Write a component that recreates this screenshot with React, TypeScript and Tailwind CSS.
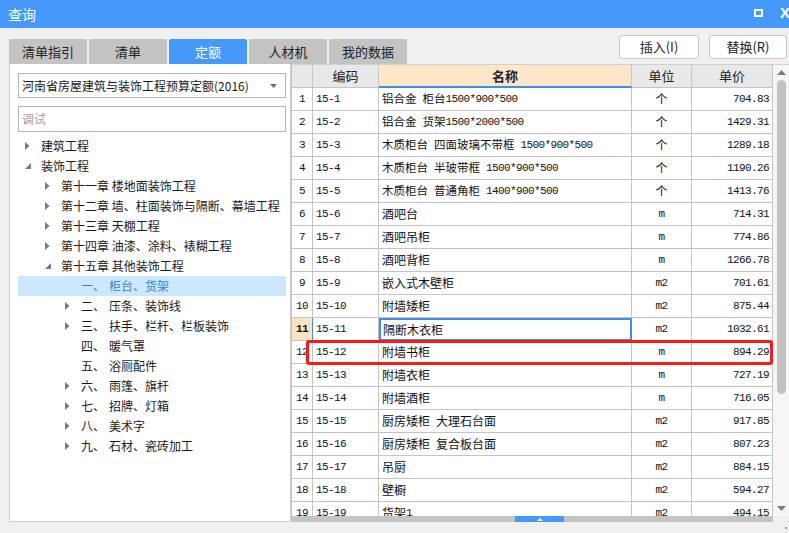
import React from "react";

type TreeItem = { l: 0 | 1 | 2; n?: string; t: string; a: "c" | "e" | ""; sel?: boolean };

const tree: TreeItem[] = [
  { l: 0, t: "建筑工程", a: "c" },
  { l: 0, t: "装饰工程", a: "e" },
  { l: 1, t: "第十一章 楼地面装饰工程", a: "c" },
  { l: 1, t: "第十二章 墙、柱面装饰与隔断、幕墙工程", a: "c" },
  { l: 1, t: "第十三章 天棚工程", a: "c" },
  { l: 1, t: "第十四章 油漆、涂料、裱糊工程", a: "c" },
  { l: 1, t: "第十五章 其他装饰工程", a: "e" },
  { l: 2, n: "一、", t: "柜台、货架", a: "", sel: true },
  { l: 2, n: "二、", t: "压条、装饰线", a: "c" },
  { l: 2, n: "三、", t: "扶手、栏杆、栏板装饰", a: "c" },
  { l: 2, n: "四、", t: "暖气罩", a: "" },
  { l: 2, n: "五、", t: "浴厕配件", a: "" },
  { l: 2, n: "六、", t: "雨篷、旗杆", a: "c" },
  { l: 2, n: "七、", t: "招牌、灯箱", a: "c" },
  { l: 2, n: "八、", t: "美术字", a: "c" },
  { l: 2, n: "九、", t: "石材、瓷砖加工", a: "c" },
];

const rows: [string, string, string, string][] = [
  ["15-1", "铝合金 柜台1500*900*500", "个", "704.83"],
  ["15-2", "铝合金 货架1500*2000*500", "个", "1429.31"],
  ["15-3", "木质柜台 四面玻璃不带框 1500*900*500", "个", "1289.18"],
  ["15-4", "木质柜台 半玻带框 1500*900*500", "个", "1190.26"],
  ["15-5", "木质柜台 普通角柜 1400*900*500", "个", "1413.76"],
  ["15-6", "酒吧台", "m", "714.31"],
  ["15-7", "酒吧吊柜", "m", "774.86"],
  ["15-8", "酒吧背柜", "m", "1266.78"],
  ["15-9", "嵌入式木壁柜", "m2", "701.61"],
  ["15-10", "附墙矮柜", "m2", "875.44"],
  ["15-11", "隔断木衣柜", "m2", "1032.61"],
  ["15-12", "附墙书柜", "m", "894.29"],
  ["15-13", "附墙衣柜", "m", "727.19"],
  ["15-14", "附墙酒柜", "m", "716.05"],
  ["15-15", "厨房矮柜 大理石台面", "m2", "917.85"],
  ["15-16", "厨房矮柜 复合板台面", "m2", "807.23"],
  ["15-17", "吊厨", "m2", "884.15"],
  ["15-18", "壁橱", "m2", "594.27"],
  ["15-19", "货架1", "m2", "494.15"],
];

const indent: Record<number, string> = { 0: "pl-[7px]", 1: "pl-[27px]", 2: "pl-[47px]" };

function Mixed({ text }: { text: string }) {
  const parts = text.split(/([\x20-\x7e]+)/).filter((p) => p.length > 0);
  return (
    <>
      {parts.map((p, i) =>
        /^[\x20-\x7e]+$/.test(p) ? (
          <span key={i} className="font-['Liberation_Mono',monospace] text-[11px] tracking-[-0.6px] whitespace-pre">
            {p}
          </span>
        ) : (
          <span key={i}>{p}</span>
        )
      )}
    </>
  );
}

function Arrow({ a }: { a: "c" | "e" | "" }) {
  if (a === "c")
    return (
      <svg width="5" height="8" viewBox="0 0 5 8" className="block">
        <polygon points="0,0 4.5,4 0,8" fill="#7b7b7b" />
      </svg>
    );
  if (a === "e")
    return (
      <svg width="6" height="6" viewBox="0 0 6 6" className="block">
        <polygon points="6,0 6,6 0,6" fill="#7b7b7b" />
      </svg>
    );
  return null;
}

const tabs = ["清单指引", "清单", "定额", "人材机", "我的数据"];

export default function App() {
  return (
    <div className="relative w-[789px] h-[533px] overflow-hidden bg-[#f0f0f0] font-['Noto_Sans_CJK_SC',sans-serif] text-[#1a1a1a] flex flex-col">
      {/* Title bar */}
      <div className="h-[28px] bg-[#4499fa] flex items-center pl-[8px] shrink-0 relative">
        <span className="text-white text-[14px] leading-none">查询</span>
        <div className="absolute left-[754px] top-[9px] w-[9px] h-[8px] border-[2px] border-white" />
        <span className="absolute left-[780px] top-[5px] text-white text-[15px] font-bold leading-none font-['Liberation_Sans',sans-serif]">X</span>
      </div>

      {/* Tab row + buttons */}
      <div className="h-[36px] flex justify-between shrink-0">
        <div className="flex items-end gap-[2px] pl-[9px]">
          {tabs.map((t) => (
            <div
              key={t}
              className={
                t === "定额"
                  ? "w-[78px] h-[25px] flex items-center justify-center bg-[#4499fa] text-white text-[13px] rounded-t-[2px]"
                  : "w-[78px] h-[25px] flex items-center justify-center bg-[#c3c3c3] text-[#222] text-[13px] rounded-t-[2px]"
              }
            >
              {t}
            </div>
          ))}
        </div>
        <div className="flex gap-[10px] pt-[7px] pr-[2px]">
          <div className="w-[80px] h-[24px] bg-white border border-[#c6c6c6] rounded-[3px] flex items-center justify-center text-[13px] text-[#222]">
            插入(I)
          </div>
          <div className="w-[78px] h-[24px] bg-white border border-[#c6c6c6] rounded-[3px] flex items-center justify-center text-[13px] text-[#222]">
            替换(R)
          </div>
        </div>
      </div>

      {/* Content */}
      <div className="h-[458px] flex shrink-0">
        {/* Left panel */}
        <div className="ml-[9px] w-[282px] bg-white border-l border-b border-r border-[#cdcdcd] flex flex-col pt-[9px] pl-[8px] pr-[4px]">
          <div className="h-[25px] border border-[#b5b5b5] flex items-center pl-[3px] pr-[8px] justify-between">
            <span className="text-[12px] leading-none text-[#1a1a1a]">河南省房屋建筑与装饰工程预算定额(2016)</span>
            <svg width="7" height="4" viewBox="0 0 7 4">
              <polygon points="0,0 7,0 3.5,4" fill="#6e6e6e" />
            </svg>
          </div>
          <div className="mt-[8px] h-[26px] border border-[#b5b5b5] flex items-center pl-[3px]">
            <span className="text-[12px] leading-none text-[#a0a0a0]">调试</span>
          </div>
          <div className="mt-[4px] flex flex-col">
            {tree.map((it, i) => (
              <div
                key={i}
                className={
                  (it.sel ? "bg-[#cce8ff] text-[#3b7fd6] " : "text-[#1a1a1a] ") +
                  "h-[20px] flex items-center text-[12px] leading-none " +
                  indent[it.l]
                }
              >
                <div className="w-[16px] flex items-center">
                  <Arrow a={it.a} />
                </div>
                {it.n && <span className="w-[28px]">{it.n}</span>}
                <span className="whitespace-pre">{it.t}</span>
              </div>
            ))}
          </div>
        </div>

        {/* Table panel */}
        <div className="flex-1 flex flex-col">
          <div className="h-[452px] flex border-t border-[#d0d0d0]">
            <div className="w-[482px] border-l border-[#c4c4c4] bg-white flex flex-col overflow-hidden">
              {/* header */}
              <div className="grid grid-cols-[21px_66px_253px_60px_81px] h-[23px] shrink-0 text-[13px] text-[#222]">
                <div className="bg-[#e8e8e8] border-r border-b border-[#c4c4c4]" />
                <div className="bg-[#e8e8e8] border-r border-b border-[#c4c4c4] flex items-center justify-center">编码</div>
                <div className="bg-[#fee6c8] border-r border-b-2 border-r-[#c4c4c4] border-b-[#3d8ee8] flex items-center justify-center font-bold">名称</div>
                <div className="bg-[#e8e8e8] border-r border-b border-[#c4c4c4] flex items-center justify-center">单位</div>
                <div className="bg-[#e8e8e8] border-r border-b border-[#c4c4c4] flex items-center justify-center">单价</div>
              </div>
              {/* rows */}
              <div className="flex-1 overflow-hidden">
                {rows.map((r, i) => {
                  const cur = i === 10;
                  return (
                    <div key={i} className="grid grid-cols-[21px_66px_253px_60px_81px] h-[23px] text-[#111]">
                      <div
                        className={
                          cur
                            ? "bg-[#fde3c3] border-b border-r border-b-[#c4c4c4] border-r-[#3d8ee8] flex items-center justify-center font-['Liberation_Mono',monospace] text-[11px] tracking-[-0.6px] font-bold"
                            : "border-b border-r border-[#c4c4c4] flex items-center justify-center font-['Liberation_Mono',monospace] text-[11px] tracking-[-0.6px]"
                        }
                      >
                        {i + 1}
                      </div>
                      <div className="border-b border-r border-[#c4c4c4] flex items-center pl-[3px] font-['Liberation_Mono',monospace] text-[11px] tracking-[-0.6px]">
                        {r[0]}
                      </div>
                      <div
                        className={
                          (cur ? "border-2 border-[#3d8ee8] pl-[2px] " : "border-b border-r border-[#c4c4c4] pl-[3px] ") +
                          (i < 5 ? "text-[11.5px] " : "text-[12px] ") +
                          "flex items-center leading-none whitespace-pre overflow-hidden"
                        }
                      >
                        <Mixed text={r[1]} />
                      </div>
                      <div className="border-b border-r border-[#c4c4c4] flex items-center justify-center text-[12px] leading-none">
                        <Mixed text={r[2]} />
                      </div>
                      <div className="border-b border-r border-[#c4c4c4] flex items-center justify-end pr-[3px] font-['Liberation_Mono',monospace] text-[11px] tracking-[-0.6px]">
                        {r[3]}
                      </div>
                    </div>
                  );
                })}
              </div>
            </div>
            {/* vertical scrollbar */}
            <div className="w-[16px] bg-[#f6f6f6] flex flex-col items-center">
              <svg width="9" height="5" viewBox="0 0 9 5" className="mt-[5px] shrink-0">
                <polygon points="0,5 9,5 4.5,0" fill="#7d7d7d" />
              </svg>
              <div className="mt-[5px] w-[9px] h-[314px] rounded-full bg-[#c2c2c2] shrink-0" />
              <div className="flex-1" />
              <svg width="9" height="5" viewBox="0 0 9 5" className="mb-[5px] shrink-0">
                <polygon points="0,0 9,0 4.5,5" fill="#7d7d7d" />
              </svg>
            </div>
          </div>
          {/* horizontal splitter bar */}
          <div className="h-[6px] flex">
            <div className="w-[482px] bg-[#c4c4c4] flex">
              <div className="ml-[224px] w-[49px] h-[6px] bg-[#4499fa] flex items-center justify-center">
                <svg width="6" height="3" viewBox="0 0 6 3">
                  <polygon points="0,3 6,3 3,0" fill="#ffffff" />
                </svg>
              </div>
            </div>
          </div>
        </div>
      </div>

      <div className="flex-1 flex justify-end items-end pr-[2px] pb-[4px]">
        <div className="w-[2px] h-[2px] bg-[#9a9a9a]" />
      </div>

      {/* Red highlight box */}
      <div className="absolute left-[306px] top-[340px] w-[467px] h-[25px] border-[3px] border-[#f11d1d] rounded-[3px]" />
    </div>
  );
}
